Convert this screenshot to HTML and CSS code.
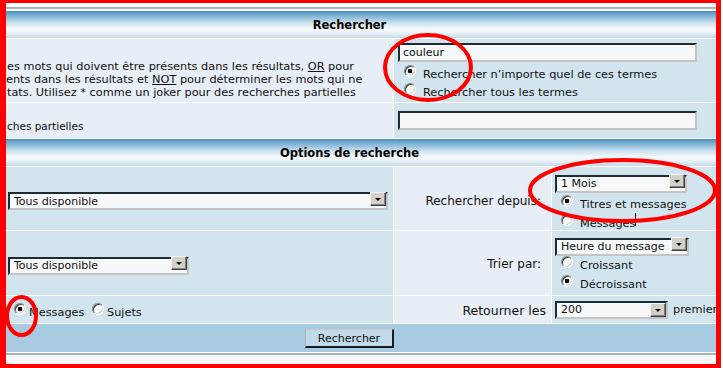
FILE: index.html
```html
<!DOCTYPE html>
<html lang="fr">
<head>
    <meta charset="UTF-8">
    <meta name="viewport" content="width=device-width, initial-scale=1.0">
    <title>Rechercher</title>
    <link rel="stylesheet" href="styles.css">
</head>
<body>
    <div class="forumline">
        <div class="th full">Rechercher</div>

        <div class="row1 hint">
            <p>es mots qui doivent être présents dans les résultats, <u>OR</u> pour</p>
            <p class="cut">ents dans les résultats et <u>NOT</u> pour déterminer les mots qui ne</p>
            <p>tats. Utilisez * comme un joker pour des recherches partielles</p>
        </div>
        <div class="row2 wide terms">
            <input type="text" class="post" value="couleur">
            <label class="opt"><input type="radio" name="terms" checked>Rechercher n’importe quel de ces termes</label>
            <label class="opt"><input type="radio" name="terms">Rechercher tous les termes</label>
        </div>

        <div class="row1 hint author">
            <p>ches partielles</p>
        </div>
        <div class="row2 wide middle">
            <input type="text" class="post" value="">
        </div>

        <div class="th full">Options de recherche</div>

        <div class="row2 middle pad">
            <span class="select sel-forum"><select><option>Tous disponible</option></select></span>
        </div>
        <div class="row1 label since">Rechercher depuis:</div>
        <div class="row2 choices first">
            <span class="select sel-time"><select><option>1 Mois</option></select></span>
            <label class="opt"><input type="radio" name="fields" checked>Titres et messages</label>
            <label class="opt"><input type="radio" name="fields">Messages</label>
        </div>

        <div class="row2 middle pad">
            <span class="select sel-cat"><select><option>Tous disponible</option></select></span>
        </div>
        <div class="row1 label sort">Trier par:</div>
        <div class="row2 choices second">
            <span class="select sel-sort"><select><option>Heure du message</option></select></span>
            <label class="opt"><input type="radio" name="dir">Croissant</label>
            <label class="opt"><input type="radio" name="dir" checked>Décroissant</label>
        </div>

        <div class="row2 showas">
            <label><input type="radio" name="show" checked>Messages</label>
            <label><input type="radio" name="show">Sujets</label>
        </div>
        <div class="row1 label limit">Retourner les</div>
        <div class="row2 middle count">
            <span class="select sel-count"><select><option>200</option></select></span>
            <span>premiers résultats</span>
        </div>

        <div class="catBottom full">
            <input type="submit" class="mainoption" value="Rechercher">
        </div>
    </div>

    <div class="footnote">Toutes les heures sont au format GMT + 1 Heure</div>

    <!-- annotations drawn over the screenshot -->
    <span class="caret"></span>
    <svg class="marks" width="723" height="368" viewBox="0 0 723 368">
        <g fill="#ff0000">
            <rect x="0" y="0" width="721" height="3"/>
            <rect x="0" y="0" width="6" height="368"/>
            <rect x="716" y="0" width="5" height="368"/>
            <rect x="0" y="364" width="721" height="4"/>
        </g>
        <g fill="none" stroke="#ff0000" stroke-width="4">
            <ellipse cx="428" cy="67.5" rx="43" ry="32.5"/>
            <ellipse cx="622.5" cy="190.5" rx="92.5" ry="30.5"/>
            <ellipse cx="21.5" cy="316" rx="14.5" ry="19"/>
        </g>
    </svg>
</body>
</html>
```

FILE: styles.css
```css
body {
    margin: 0;
    width: 723px;
    height: 368px;
    overflow: hidden;
    position: relative;
    background-color: #fff;
    color: #111;
    font-family: "DejaVu Sans", Verdana, sans-serif;
}
p {
    margin: 0;
}
.forumline {
    width: 720px;
    margin-top: 7px;
    padding: 2px 0 1px;
    border-top: 2px solid #a6b4c0;
    border-bottom: 2px solid #a6b4c0;
    background-color: #fff;
    display: grid;
    grid-template-columns: 393px 157px 1fr;
    grid-template-rows: 27px 63px 35px 27px 63px 64px 27px 28px;
    gap: 1px;
}
.forumline > div {
    overflow: hidden;
    white-space: nowrap;
    box-sizing: border-box;
}
.full {
    grid-column: 1 / 4;
}
.wide {
    grid-column: 2 / 4;
}
.th {
    display: flex;
    align-items: center;
    justify-content: center;
    padding-right: 21px;
    font-size: 11.5px;
    font-weight: bold;
    color: #000;
    background: linear-gradient(to bottom, #4a8fbe 0%, #86b6d7 20%, #cde2ef 45%, #f5f9fc 66%, #eef5f9 78%, #c4daea 100%);
}
.row1 {
    background-color: #e7eef5;
}
.row2 {
    background-color: #d2e5ef;
}
.catBottom {
    background-color: #a8cbe1;
    display: flex;
    align-items: center;
    justify-content: center;
    padding: 1px 21px 0 0;
}
.middle {
    display: flex;
    align-items: center;
}
.pad {
    padding-left: 8px;
}

/* left hint texts */
.hint {
    font-size: 11.3px;
    line-height: 13px;
    padding: 21px 0 0 7px;
}
.hint .cut {
    margin-left: -1px;
}
.hint.author {
    font-size: 10.5px;
    padding-top: 17px;
}

/* text fields */
input.post {
    box-sizing: border-box;
    width: 299px;
    height: 19px;
    margin: 0;
    padding: 0 3px;
    border: 2px solid;
    border-color: #1d2b33 #c4c4c4 #c4c4c4 #1d2b33;
    background-color: #f6f8fa;
    font-family: inherit;
    font-size: 11px;
    color: #111;
    outline: none;
}
.wide.middle {
    padding-left: 4px;
}
.terms {
    padding: 4px 0 0 4px;
}
.terms .post {
    display: block;
    margin-bottom: 3px;
}

/* radio buttons */
input[type="radio"] {
    appearance: none;
    -webkit-appearance: none;
    box-sizing: border-box;
    display: inline-block;
    width: 12px;
    height: 12px;
    margin: 0 7px 1px 6px;
    border-radius: 50%;
    border: 1px solid;
    border-color: #808080 #fff #fff #808080;
    background-color: #fff;
    box-shadow: inset 1px 1px 0 #404040, inset -1px -1px 0 #d4d0c8;
    vertical-align: baseline;
}
input[type="radio"]:checked {
    background: radial-gradient(circle, #000 0 2px, #fff 2.6px);
}
.opt {
    display: block;
    font-size: 11.3px;
    line-height: 18px;
}
.terms .opt + .opt {
    margin-top: -1px;
}

/* selects */
.select {
    position: relative;
    display: inline-block;
    flex-shrink: 0;
    height: 18px;
}
.select select {
    appearance: none;
    -webkit-appearance: none;
    box-sizing: border-box;
    width: 100%;
    height: 18px;
    margin: 0;
    padding: 0 0 0 4px;
    border: 2px solid;
    border-color: #1d2b33 #c4c4c4 #c4c4c4 #1d2b33;
    border-radius: 0;
    background-color: #f6f8fa;
    font-family: inherit;
    font-size: 11px;
    color: #111;
}
.select::after {
    content: "";
    position: absolute;
    top: 2px;
    right: 2px;
    box-sizing: border-box;
    width: 16px;
    height: 14px;
    background-color: #d4d0c8;
    border: 1px solid;
    border-color: #f4f4f4 #404040 #404040 #f4f4f4;
    box-shadow: inset -1px -1px 0 #808080;
}
.select::before {
    content: "";
    position: absolute;
    z-index: 1;
    top: 8px;
    right: 7px;
    border-style: solid;
    border-width: 3px 3px 0 3px;
    border-color: #000 transparent transparent transparent;
}
.sel-forum { width: 380px; }
.sel-cat { width: 181px; }
.sel-time { width: 132px; }
.sel-sort { width: 134px; }
.sel-count { width: 113px; }

/* option columns */
.label {
    display: flex;
    align-items: center;
    justify-content: flex-end;
    font-size: 12px;
    padding-right: 10px;
}
.since {
    padding-top: 4px;
}
.sort {
    padding-top: 2px;
}
.limit {
    padding: 1px 5px 0 0;
    font-size: 12.5px;
}
.choices {
    padding-left: 3px;
}
.choices.first {
    padding-top: 5px;
}
.choices.first .opt:first-of-type {
    margin-top: 4px;
}
.choices.second {
    padding-top: 4px;
}
.choices.second .opt:first-of-type {
    margin-top: 2px;
}
.count {
    padding-left: 3px;
    gap: 5px;
    font-size: 11.3px;
}
.showas {
    font-size: 11.3px;
    line-height: 18px;
    padding-top: 7px;
}
.showas input[type="radio"] {
    margin: 0 3px 1px 14px;
}
.showas label + label input[type="radio"] {
    margin-left: 4px;
}

/* submit */
.mainoption {
    box-sizing: border-box;
    width: 89px;
    height: 19px;
    margin: 0;
    padding: 0;
    border: 2px solid;
    border-color: #c8c8c8 #1a1a1a #1a1a1a #b4b4b4;
    border-top-width: 1px;
    border-left-width: 1px;
    background-color: #c0daea;
    font-family: inherit;
    font-size: 11px;
    color: #111;
}

.footnote {
    width: 720px;
    height: 20px;
    box-sizing: border-box;
    padding: 9px 0 0 658px;
    background-color: #f5f7fa;
    font-size: 10px;
    white-space: nowrap;
    overflow: hidden;
}

/* screenshot annotations */
.caret {
    position: absolute;
    left: 635px;
    top: 213px;
    width: 1px;
    height: 13px;
    background-color: #000;
}
.marks {
    position: absolute;
    top: 0;
    left: 0;
    pointer-events: none;
}
```
